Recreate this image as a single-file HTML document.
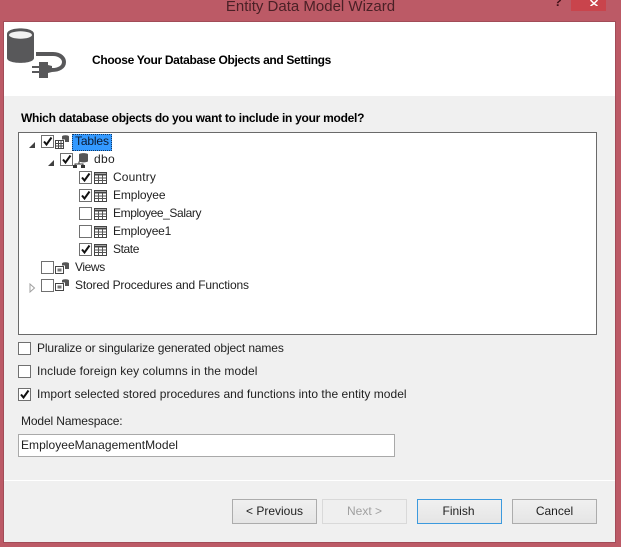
<!DOCTYPE html>
<html><head><meta charset="utf-8"><style>
html,body{margin:0;padding:0}
body{width:621px;height:547px;overflow:hidden;position:relative;background:#bc5a66;font-family:"Liberation Sans",sans-serif;font-size:12px;color:#1f1f1f}
div{position:absolute;box-sizing:border-box;white-space:nowrap}
.t{line-height:16px;height:16px}
.cb{width:13px;height:13px;background:#fff;border:1px solid #707070}
.cb svg{position:absolute;left:0;top:0}
.btn{top:499px;width:85px;height:25px;border:1px solid #acacac;background:linear-gradient(#f0f0f0,#e5e5e5);text-align:center;line-height:23px}
svg{position:absolute}
</style></head><body>
<div class="t" style="left:0;width:621px;top:-1px;text-align:center;font-size:15px;color:#4a2026">Entity Data Model Wizard</div>
<div style="left:554px;top:-5px;font-size:13px;font-weight:bold;color:#401018;line-height:14px">?</div>
<div style="left:571px;top:0;width:35px;height:11px;background:#c9444c"></div>
<svg style="left:589px;top:0" width="10" height="6"><path d="M1.500 0L5 3.500L8.500 0M1.500 6L5 3.500L8.500 6" stroke="#fff" stroke-width="1.500" fill="none"/></svg>

<div style="left:3px;top:21px;width:613px;height:522px;background:#a24c58"></div>
<div style="left:4px;top:22px;width:611px;height:520px;background:#f0f0f0"></div>
<div style="left:4px;top:22px;width:611px;height:74px;background:#fff"></div>
<div style="left:4px;top:480px;width:611px;height:1px;background:#fff"></div>

<svg style="left:6px;top:27px" width="62" height="56" viewBox="0 0 62 56">
<path d="M1 7C1 -.5 28 -.5 28 7V31C28 37.500 1 37.500 1 31Z" fill="#58585a"/>
<ellipse cx="14.500" cy="8" rx="11.500" ry="3.700" fill="#f2f2f2"/>
<path d="M30 27H47C55 27 58 32 58 35C58 40 53 43 46 43" stroke="#58585a" stroke-width="4" fill="none"/>
<path d="M33 35H42V38L46 39V45L42 46V51H33V46H26V44H33V41H26V39H33Z" fill="#58585a"/>
</svg>
<div class="t" style="left:92px;top:52px;font-weight:bold;color:#000;letter-spacing:-.34px">Choose Your Database Objects and Settings</div>
<div class="t" style="left:21px;top:110px;font-weight:bold;color:#000;letter-spacing:-.27px">Which database objects do you want to include in your model?</div>

<div style="left:18px;top:132px;width:579px;height:203px;background:#fff;border:1px solid #6a6a6a"></div>

<svg style="left:28px;top:141px" width="8" height="8"><path d="M7 1V7H1Z" fill="#404040"/></svg>
<svg style="left:47px;top:159px" width="8" height="8"><path d="M7 1V7H1Z" fill="#404040"/></svg>
<svg style="left:29px;top:283px" width="7" height="10"><path d="M1 1L5.500 5L1 9Z" fill="#fff" stroke="#a0a0a0"/></svg>

<div class="cb" style="left:41px;top:135px"><svg width="11" height="11"><path d="M2 5.500L4.500 8.500L9.500 1.500" stroke="#111" stroke-width="2" fill="none"/></svg></div>
<div class="cb" style="left:60px;top:153px"><svg width="11" height="11"><path d="M2 5.500L4.500 8.500L9.500 1.500" stroke="#111" stroke-width="2" fill="none"/></svg></div>
<div class="cb" style="left:79px;top:171px"><svg width="11" height="11"><path d="M2 5.500L4.500 8.500L9.500 1.500" stroke="#111" stroke-width="2" fill="none"/></svg></div>
<div class="cb" style="left:79px;top:189px"><svg width="11" height="11"><path d="M2 5.500L4.500 8.500L9.500 1.500" stroke="#111" stroke-width="2" fill="none"/></svg></div>
<div class="cb" style="left:79px;top:207px"></div>
<div class="cb" style="left:79px;top:225px"></div>
<div class="cb" style="left:79px;top:243px"><svg width="11" height="11"><path d="M2 5.500L4.500 8.500L9.500 1.500" stroke="#111" stroke-width="2" fill="none"/></svg></div>
<div class="cb" style="left:41px;top:261px"></div>
<div class="cb" style="left:41px;top:279px"></div>

<svg style="left:54px;top:134px" width="17" height="16"><rect x="1.500" y="6.500" width="8" height="8" fill="#fff" stroke="#444"/><path d="M1.500 9.500H9.500M1.500 12H9.500M4.500 6.500V14.500M7 6.500V14.500" stroke="#444"/><path d="M8 2.500C8 .8 15 .8 15 2.500V8H11V5.500H8Z" fill="#555"/></svg>
<svg style="left:73px;top:152px" width="17" height="17"><path d="M6 2.500C6 .7 15 .7 15 2.500V9C15 10.800 6 10.800 6 9Z" fill="#555"/><path d="M6 9.500V12M2 15V12H10V15" stroke="#333" fill="none"/><rect x="0" y="13" width="4" height="3" fill="#333"/><rect x="8" y="13" width="4" height="3" fill="#333"/></svg>
<svg style="left:94px;top:172px" width="14" height="13"><rect x=".5" y=".5" width="12" height="11" fill="#fff" stroke="#444"/><path d="M.5 2.500H12.500" stroke="#444" stroke-width="2"/><path d="M1 6H12M1 8.500H12M4.500 3V11M8.500 3V11" stroke="#555"/></svg>
<svg style="left:94px;top:190px" width="14" height="13"><rect x=".5" y=".5" width="12" height="11" fill="#fff" stroke="#444"/><path d="M.5 2.500H12.500" stroke="#444" stroke-width="2"/><path d="M1 6H12M1 8.500H12M4.500 3V11M8.500 3V11" stroke="#555"/></svg>
<svg style="left:94px;top:208px" width="14" height="13"><rect x=".5" y=".5" width="12" height="11" fill="#fff" stroke="#444"/><path d="M.5 2.500H12.500" stroke="#444" stroke-width="2"/><path d="M1 6H12M1 8.500H12M4.500 3V11M8.500 3V11" stroke="#555"/></svg>
<svg style="left:94px;top:226px" width="14" height="13"><rect x=".5" y=".5" width="12" height="11" fill="#fff" stroke="#444"/><path d="M.5 2.500H12.500" stroke="#444" stroke-width="2"/><path d="M1 6H12M1 8.500H12M4.500 3V11M8.500 3V11" stroke="#555"/></svg>
<svg style="left:94px;top:244px" width="14" height="13"><rect x=".5" y=".5" width="12" height="11" fill="#fff" stroke="#444"/><path d="M.5 2.500H12.500" stroke="#444" stroke-width="2"/><path d="M1 6H12M1 8.500H12M4.500 3V11M8.500 3V11" stroke="#555"/></svg>
<svg style="left:54px;top:261px" width="17" height="14"><rect x="1.500" y="5.500" width="8" height="7" fill="#fff" stroke="#444"/><rect x="3.500" y="7.500" width="4" height="3" fill="#777"/><path d="M8 2.500C8 .8 15 .8 15 2.500V8H11V4.500H8Z" fill="#555"/></svg>
<svg style="left:54px;top:278px" width="17" height="14"><rect x="1.500" y="5.500" width="8" height="7" fill="#fff" stroke="#444"/><rect x="3.500" y="7.500" width="4" height="3" fill="#777"/><path d="M8 2.500C8 .8 15 .8 15 2.500V8H11V4.500H8Z" fill="#555"/></svg>

<div style="left:72px;top:134px;width:40px;height:17px;background:#3399ff;border:1px dotted #123a66"></div>
<div class="t" style="left:75px;top:133px;color:#0c1a30;letter-spacing:-.15px">Tables</div>
<div class="t" style="left:94px;top:151px;letter-spacing:.3px">dbo</div>
<div class="t" style="left:113px;top:169px;letter-spacing:.14px">Country</div>
<div class="t" style="left:113px;top:187px;letter-spacing:-.12px">Employee</div>
<div class="t" style="left:113px;top:205px;letter-spacing:-.4px">Employee_Salary</div>
<div class="t" style="left:113px;top:223px;letter-spacing:-.22px">Employee1</div>
<div class="t" style="left:113px;top:241px;letter-spacing:-.4px">State</div>
<div class="t" style="left:75px;top:259px;letter-spacing:-.4px">Views</div>
<div class="t" style="left:75px;top:277px;letter-spacing:-.16px">Stored Procedures and Functions</div>

<div class="cb" style="left:18px;top:342px"></div>
<div class="t" style="left:37px;top:340px;letter-spacing:-.13px">Pluralize or singularize generated object names</div>
<div class="cb" style="left:18px;top:365px"></div>
<div class="t" style="left:37px;top:363px;letter-spacing:.075px">Include foreign key columns in the model</div>
<div class="cb" style="left:18px;top:388px"><svg width="11" height="11"><path d="M2 5.500L4.500 8.500L9.500 1.500" stroke="#111" stroke-width="2" fill="none"/></svg></div>
<div class="t" style="left:37px;top:386px;letter-spacing:.03px">Import selected stored procedures and functions into the entity model</div>
<div class="t" style="left:21px;top:413px;letter-spacing:-.12px">Model Namespace:</div>
<div style="left:18px;top:434px;width:377px;height:23px;background:#fff;border:1px solid #a9a9a9;line-height:21px;padding-left:2px;letter-spacing:.04px">EmployeeManagementModel</div>

<div class="btn" style="left:232px">&lt; Previous</div>
<div class="btn" style="left:322px;border-color:#d9d9d9;background:#efefef;color:#a0a0a0">Next &gt;</div>
<div class="btn" style="left:417px;border-color:#3c9ade;padding-right:2px">Finish</div>
<div class="btn" style="left:512px">Cancel</div>
</body></html>
